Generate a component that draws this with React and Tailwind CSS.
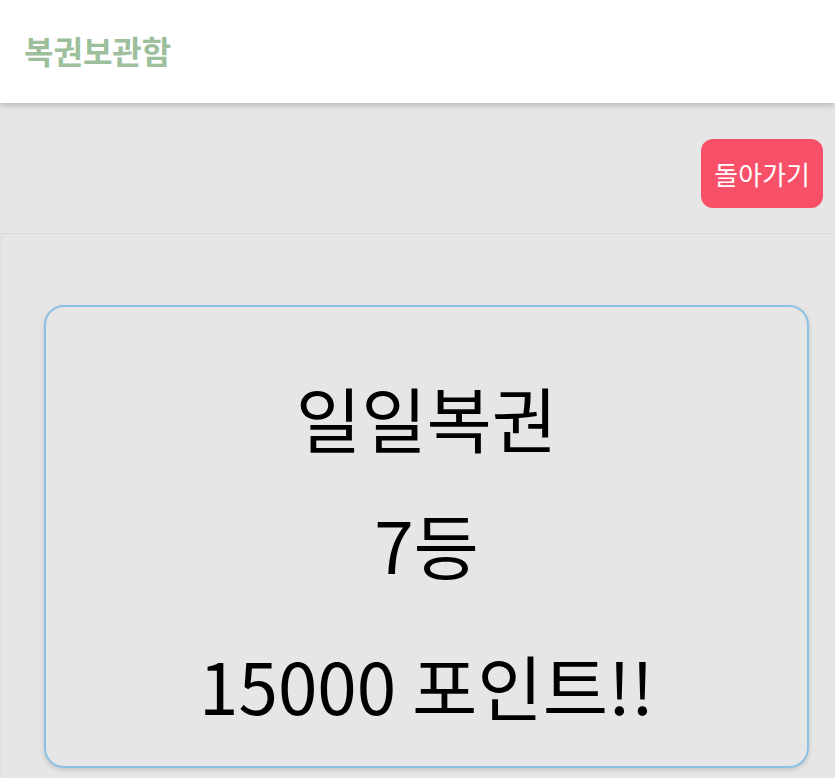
import React from 'react';

const font = { fontFamily: '"Noto Sans CJK KR", "Noto Sans", sans-serif' };

export default function App() {
  return (
    <div className="min-h-screen bg-[#e6e6e6] overflow-hidden" style={font}>
      <header className="h-[103px] bg-white flex items-center px-6 pb-1 shadow-[0_3px_6px_rgba(0,0,0,0.18)] relative z-10">
        <h1 className="text-[32px] font-bold text-[#9dbf9c]">복권보관함</h1>
      </header>

      <div className="flex justify-end pt-9 pr-3 pb-[25px]">
        <button className="h-[69px] px-[13px] rounded-xl bg-[#f9506a] text-white text-[26px]">
          돌아가기
        </button>
      </div>

      <section className="border-t border-l border-[#d9d9d9] ml-[1px] pt-[71px] pb-10">
        <div className="ml-[42px] w-[765px] h-[463px] rounded-[20px] border-2 border-[#8cc0e4] shadow-[0_2px_5px_rgba(0,0,0,0.15)] flex flex-col items-center pt-[67px] text-black">
          <p className="text-[71px] leading-[84px]">일일복권</p>
          <p className="text-[71px] leading-[84px] mt-[43px]">7등</p>
          <p className="text-[71px] leading-[84px] mt-[57px]">15000 포인트!!</p>
        </div>
      </section>
    </div>
  );
}
